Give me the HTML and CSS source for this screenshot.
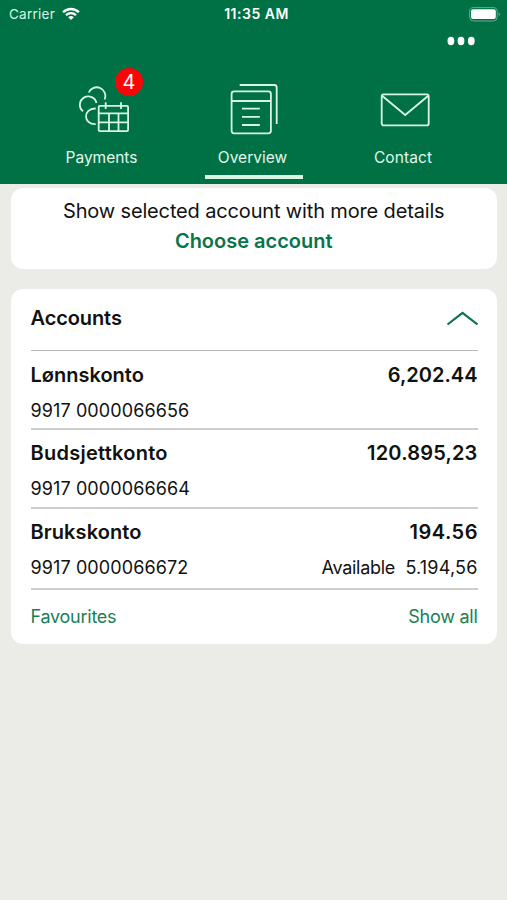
FILE: index.html
```html
<!DOCTYPE html>
<html lang="en">
<head>
<meta charset="utf-8">
<title>Overview</title>
<link rel="stylesheet" href="styles.css">
</head>
<body>
<header class="header">
  <div class="status">
    <div class="carrier"><span>Carrier</span>
      <svg width="18" height="14" viewBox="0 0 18 14" fill="none" stroke="#fff" stroke-width="2.3"><path d="M1.1 5.2C5.5.9 12.5.9 16.9 5.2M4 8.2c2.800-2.700 7.200-2.700 10 0"/><path d="M9 13 6.200 10.200q2.800-2.300 5.600 0z" fill="#fff" stroke="none"/></svg>
    </div>
    <div class="clock">11:35 AM</div>
    <svg class="battery" width="32" height="15" viewBox="0 0 32 15"><rect x=".6" y=".6" width="27.6" height="13.4" rx="4" fill="none" stroke="#fff" stroke-opacity=".4" stroke-width="1"/><rect x="2" y="2.200" width="24.8" height="9.800" rx="2" fill="#fff"/><path d="M29.800 5.200q2 2 0 4z" fill="#fff" fill-opacity=".5"/></svg>
  </div>
  <div class="toolbar">
    <svg width="28" height="10" viewBox="0 0 28 10" fill="#fff"><ellipse cx="3.900" cy="5" rx="3.400" ry="4.200"/><ellipse cx="14" cy="5" rx="3.400" ry="4.200"/><ellipse cx="24.300" cy="5" rx="3.400" ry="4.200"/></svg>
  </div>
  <nav class="tabs">
    <a class="tab">
      <span class="icon">
        <svg width="54" height="54" viewBox="0 0 54 54" fill="none" stroke="#d9f5e6" stroke-width="1.8"><path d="M12.700 10.500A8.600 8.600 0 0 1 28.700 17.500M7 29.300A8.400 8.400 0 1 1 20.500 21M19.700 42.200C6.800 42.800 6.800 26 19.700 26.500"/><rect x="22.700" y="23.800" width="29.400" height="25.400" rx="1.200"/><path d="M22.700 31.400h29.400M22.700 40.300h29.400M33 31.400v17.800M42.500 31.400v17.800M29.700 20.300v6.800M45 20.300v6.800"/></svg>
        <span class="badge">4</span>
      </span>
      <span class="label">Payments</span>
    </a>
    <a class="tab active">
      <span class="icon">
        <svg width="54" height="54" viewBox="0 0 54 54" fill="none" stroke="#d9f5e6" stroke-width="1.8"><rect x="4.600" y="9.300" width="39.300" height="42" rx="2.500"/><path d="M4.600 19h39.300M12.700 3h34.500q2.500 0 2.500 2.500V42M15 26.700h17.800M15 34.900h17.800M15 43h17.800"/></svg>
      </span>
      <span class="label">Overview</span>
    </a>
    <a class="tab">
      <span class="icon">
        <svg width="54" height="54" viewBox="0 0 54 54" fill="none" stroke="#d9f5e6" stroke-width="1.8"><rect x="3.700" y="12.400" width="47" height="31" rx="2"/><path d="M4.400 14 27.200 33 50 14"/></svg>
      </span>
      <span class="label label-contact">Contact</span>
    </a>
  </nav>
</header>
<main class="content">
  <section class="card choose">
    <div class="prompt">Show selected account with more details</div>
    <a class="choose-link">Choose account</a>
  </section>
  <section class="card accounts">
    <div class="accounts-head"><h2>Accounts</h2>
      <svg width="32" height="16" viewBox="0 0 32 16" fill="none" stroke="#087549" stroke-width="2.2"><path d="M1.500 14.500 16.500 3l15 11.500"/></svg>
    </div>
    <div class="account first">
      <div class="row main-row"><span>Lønnskonto</span><span>6,202.44</span></div>
      <div class="row sub-row"><span class="number">9917 0000066656</span></div>
    </div>
    <div class="account">
      <div class="row main-row"><span class="wide">Budsjettkonto</span><span class="wide-slight">120.895,23</span></div>
      <div class="row sub-row"><span class="number">9917 0000066664</span></div>
    </div>
    <div class="account last">
      <div class="row main-row"><span class="wide-tiny">Brukskonto</span><span class="wider">194.56</span></div>
      <div class="row sub-row"><span class="number">9917 0000066672</span><span class="available"><span class="available-label">Available</span><span class="wide-slight">5.194,56</span></span></div>
    </div>
    <div class="row links"><a>Favourites</a><a>Show all</a></div>
  </section>
</main>
</body>
</html>
```

FILE: styles.css
```css
* { box-sizing: border-box; }
body { margin: 0; min-height: 900px; background: #ebebe7; font-family: Inter, "Liberation Sans", sans-serif; color: #111; }
.header { height: 184px; background: #007144; color: #fff; display: flex; flex-direction: column; }
.status { height: 28px; padding: 0 6px 0 9px; display: grid; grid-template-columns: 1fr auto 1fr; align-items: center; }
.carrier { display: flex; align-items: center; gap: 6.5px; font-size: 13.5px; color: #d9f5e6; letter-spacing: .25px; }
.clock { font-size: 14px; font-weight: 600; letter-spacing: .5px; padding: 0 0 2px 3px; }
.battery { justify-self: end; }
.toolbar { height: 26px; padding: 8px 32px 0 0; display: flex; justify-content: flex-end; }
.tabs { display: grid; grid-template-columns: repeat(3, 151px); padding: 28px 0 0 26px; flex: 1; }
.tab { display: flex; flex-direction: column; align-items: center; }
.icon { position: relative; height: 54px; width: 52px; margin-right: -1px; }
.icon svg { display: block; }
.badge { position: absolute; left: 39px; top: -14px; width: 28px; height: 28px; border-radius: 50%; background: #fb0509; font-size: 20px; line-height: 28px; text-align: center; }
.label { height: 38px; line-height: 43px; font-size: 15.5px; color: #e3f7ed; white-space: nowrap; }
.label-contact { letter-spacing: .1px; margin-right: 1px; }
.active::after { content: ""; width: 98px; height: 4px; margin: .5px -3px 0 0; background: #d9f5e6; }
.content { padding: 4px 10px 0 10.5px; display: flex; flex-direction: column; gap: 20px; }
.card { background: #fff; border-radius: 12px; }
.choose { height: 81px; padding-top: 7px; text-align: center; }
.prompt { font-size: 20px; line-height: 32px; height: 31px; letter-spacing: -.15px; white-space: nowrap; }
.choose-link { display: block; font-size: 20px; font-weight: 600; line-height: 31px; color: #087549; }
.accounts { height: 355px; padding: 0 19.5px 0 20px; }
.accounts-head { height: 62px; padding-bottom: 4px; display: flex; align-items: center; justify-content: space-between; border-bottom: 1px solid #b9b9b9; }
h2 { margin: 0; font-size: 20px; font-weight: 600; letter-spacing: -.1px; }
.account { height: 79px; border-bottom: 2px solid #cdcdcd; }
.account.last { height: 81px; }
.row { display: flex; justify-content: space-between; white-space: nowrap; }
.main-row { font-size: 20px; font-weight: 600; line-height: 46px; height: 43px; }
.first .main-row { line-height: 48px; }
.wide { letter-spacing: .26px; }
.wide-slight { letter-spacing: .18px; }
.wide-tiny { letter-spacing: .08px; }
.wider { letter-spacing: .5px; margin-right: -.5px; }
.sub-row { font-size: 18px; line-height: 31px; }
.first .sub-row { line-height: 33px; }
.number { letter-spacing: .1px; }
.available { display: flex; gap: 10.5px; }
.available-label { letter-spacing: -.3px; }
.links { font-size: 18px; line-height: 53px; letter-spacing: -.25px; color: #198052; }
```
